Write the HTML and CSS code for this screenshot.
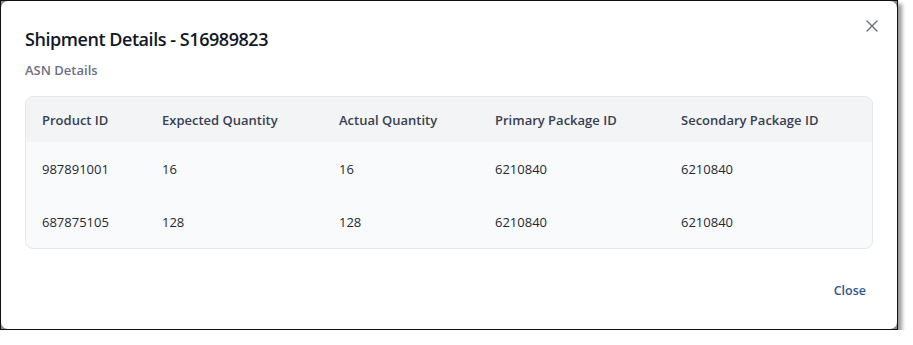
FILE: index.html
```html
<!DOCTYPE html>
<html>
<head>
<meta charset="utf-8">
<link rel="stylesheet" href="styles.css">
</head>
<body>
<div class="frame">
  <div class="dialog">
    <button class="x" aria-label="Close">
      <svg width="12" height="12" viewBox="0 0 12 12"><path d="M1 1L11 11M11 1L1 11" stroke="#6b7280" stroke-width="1.4" stroke-linecap="round"/></svg>
    </button>
    <h1 class="title">Shipment Details - S16989823</h1>
    <h2 class="subtitle">ASN Details</h2>
    <div class="table-wrap">
      <table class="table">
        <thead>
          <tr>
            <th class="c1">Product ID</th>
            <th class="c2">Expected Quantity</th>
            <th class="c3">Actual Quantity</th>
            <th class="c4">Primary Package ID</th>
            <th class="c5">Secondary Package ID</th>
          </tr>
        </thead>
        <tbody>
          <tr><td>987891001</td><td>16</td><td>16</td><td>6210840</td><td>6210840</td></tr>
          <tr><td>687875105</td><td>128</td><td>128</td><td>6210840</td><td>6210840</td></tr>
        </tbody>
      </table>
    </div>
    <div class="footer">
      <button class="close-btn">Close</button>
    </div>
  </div>
</div>
</body>
</html>
```

FILE: styles.css
```css
* { box-sizing: border-box; }
html, body { margin: 0; padding: 0; background: #fff; }
body { font-family: "Open Sans", "Noto Sans", sans-serif; }

.frame {
  width: 898px;
  height: 330px;
  border: 1px solid #111;
  background: #8a8a8a;
  box-shadow: 4px 4px 4px rgba(0,0,0,0.4);
}
.dialog {
  position: relative;
  height: 100%;
  background: #fff;
  border-radius: 7px;
  padding: 26px 24px 0 24px;
  display: flex;
  flex-direction: column;
}
.x {
  position: absolute;
  top: 19px;
  right: 19px;
  border: 0;
  background: none;
  padding: 0;
  width: 12px;
  height: 12px;
  display: flex;
}
.title {
  margin: 0;
  font-size: 18px;
  line-height: 24px;
  font-weight: 600;
  color: #111827;
  letter-spacing: -0.45px;
}
.subtitle {
  margin: 10px 0 0 0;
  font-size: 13px;
  line-height: 18px;
  font-weight: 600;
  color: #6b7280;
}
.table-wrap {
  margin-top: 17px;
  border: 1px solid #e5e7eb;
  border-radius: 8px;
  overflow: hidden;
  background: #f9fafb;
}
.table {
  width: 100%;
  border-collapse: collapse;
  font-size: 13px;
}
.table th {
  background: #f3f4f6;
  text-align: left;
  font-weight: 600;
  color: #374151;
  height: 45px;
  padding: 0 0 0 16px;
}
.table td {
  height: 53px;
  padding: 0 0 0 16px;
  color: #1f2937;
}
.c1 { width: 120px; }
.c2 { width: 177px; }
.c3 { width: 156px; }
.c4 { width: 186px; }
.footer {
  display: flex;
  justify-content: flex-end;
  margin-top: 33px;
}
.close-btn {
  border: 0;
  background: none;
  font-family: inherit;
  font-size: 12.5px;
  font-weight: 600;
  color: #30578c;
  padding: 0 7px 0 0;
}
```
